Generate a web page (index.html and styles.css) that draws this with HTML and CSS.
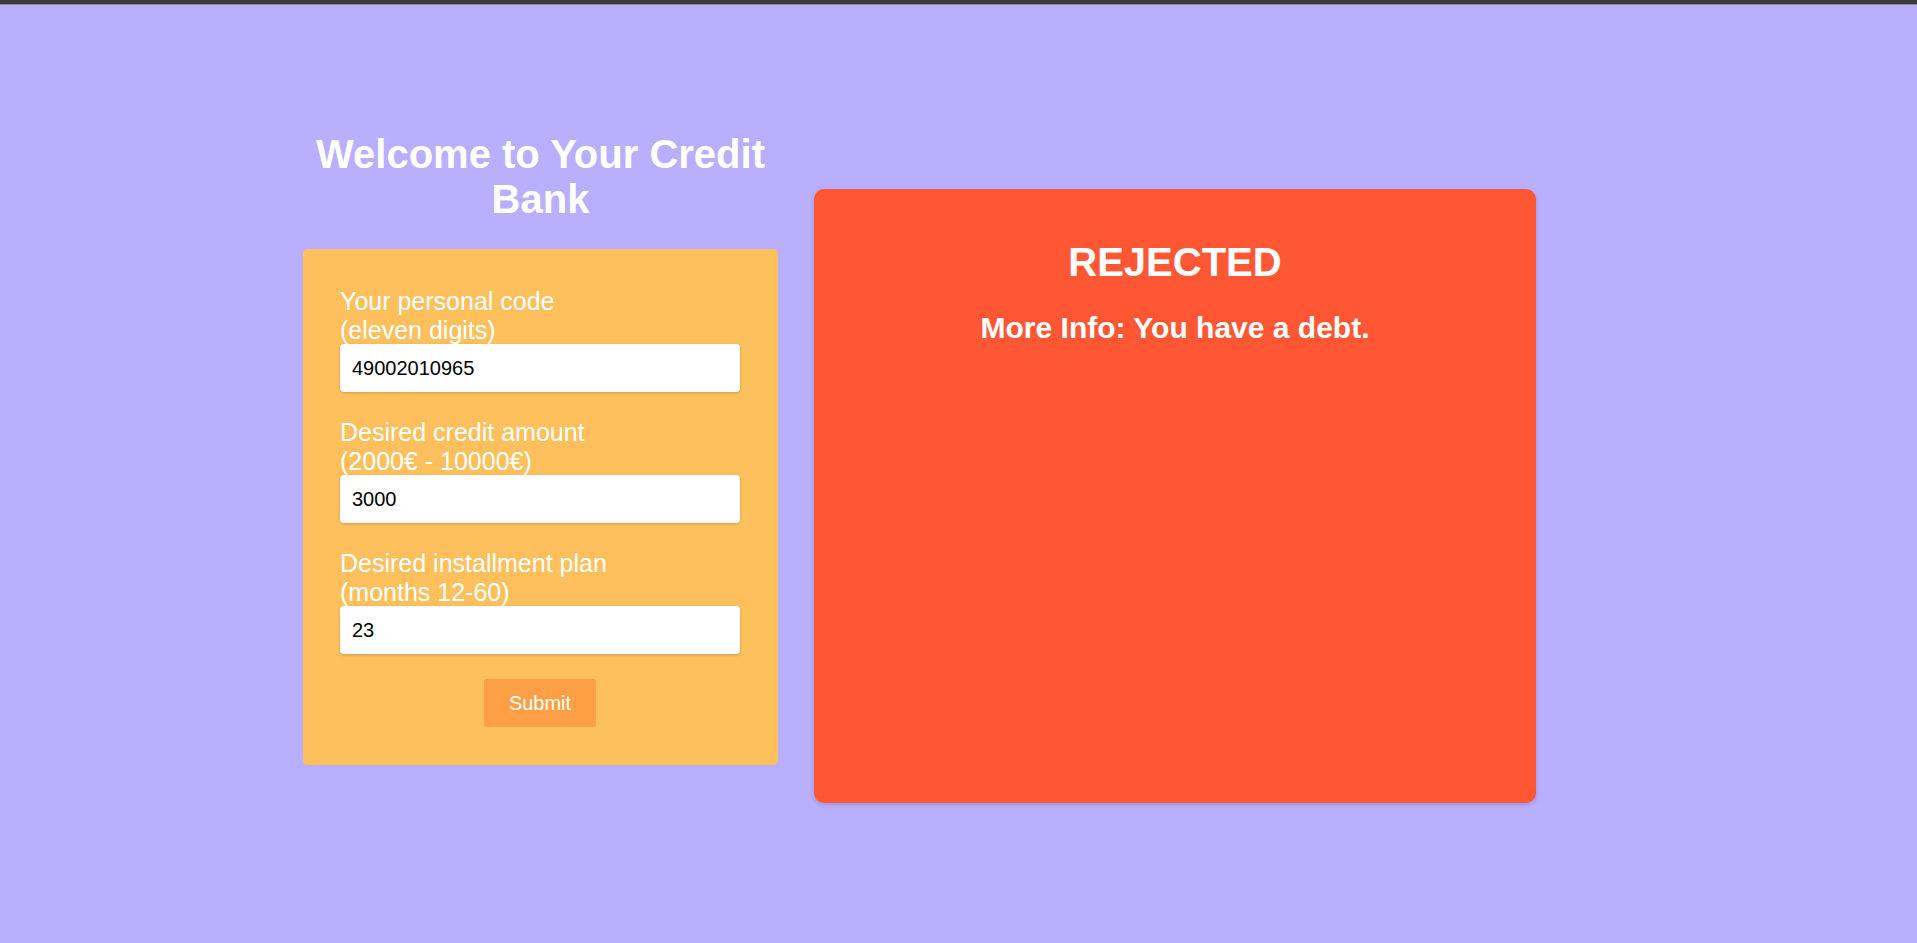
FILE: index.html
```html
<!DOCTYPE html>
<html lang="en">
<head>
<meta charset="utf-8">
<title>Your Credit Bank</title>
<link rel="stylesheet" href="styles.css">
</head>
<body>
<div class="topbar"></div>
<main class="page">
  <section class="left-col">
    <h1 class="title">Welcome to Your Credit Bank</h1>
    <form class="form-card">
      <div class="field">
        <label class="label" for="code">Your personal code<br>(eleven digits)</label>
        <input class="input" id="code" type="text" value="49002010965">
      </div>
      <div class="field">
        <label class="label" for="amount">Desired credit amount<br>(2000€ - 10000€)</label>
        <input class="input" id="amount" type="text" value="3000">
      </div>
      <div class="field">
        <label class="label" for="months">Desired installment plan<br>(months 12-60)</label>
        <input class="input" id="months" type="text" value="23">
      </div>
      <div class="actions">
        <button class="submit" type="button">Submit</button>
      </div>
    </form>
  </section>
  <section class="result-card">
    <h1 class="result-title">REJECTED</h1>
    <h2 class="result-info">More Info: You have a debt.</h2>
  </section>
</main>
</body>
</html>
```
FILE: styles.css
```css
html, body {
  margin: 0;
  padding: 0;
}
body {
  background: #baaeff;
  font-family: "Liberation Sans", Arial, sans-serif;
  font-size: 20px;
  min-height: 943px;
}
.topbar {
  height: 4px;
  background: #3a3a3c;
  border-bottom: 1px solid #8d889f;
}
.page {
  display: flex;
  align-items: flex-start;
  gap: 36px;
  padding: 127px 0 0 303px;
}
.left-col {
  width: 475px;
  display: flex;
  flex-direction: column;
}
.title {
  margin: 0 0 27px;
  font-size: 40px;
  font-weight: bold;
  color: #ffffff;
  text-align: center;
  line-height: 45px;
}
.form-card {
  background: #febf5d;
  border-radius: 5px;
  padding: 38px 38px 38px 37px;
  display: flex;
  flex-direction: column;
  gap: 26px;
}
.field {
  display: flex;
  flex-direction: column;
}
.label {
  color: #ffffff;
  font-size: 25px;
  line-height: 28.5px;
}
.input {
  box-sizing: border-box;
  width: 400px;
  height: 48px;
  border: none;
  border-radius: 4px;
  padding: 0 12px;
  font-family: "Liberation Sans", Arial, sans-serif;
  font-size: 20px;
  color: #000000;
  background: #ffffff;
  box-shadow: 0 1px 3px rgba(0, 0, 0, 0.18);
  outline: none;
}
.actions {
  display: flex;
  justify-content: center;
  margin-top: -1px;
}
.submit {
  width: 112px;
  height: 48px;
  border: none;
  border-radius: 3px;
  background: #ff9f45;
  color: #ffffff;
  font-family: "Liberation Sans", Arial, sans-serif;
  font-size: 20px;
  padding: 0;
}
.result-card {
  box-sizing: border-box;
  width: 722px;
  height: 614px;
  margin-top: 57px;
  background: #ff5733;
  border-radius: 10px;
  box-shadow: 0 2px 4px rgba(0, 0, 0, 0.15);
  padding-top: 50px;
  text-align: center;
  color: #ffffff;
}
.result-title {
  margin: 0 0 26px;
  font-size: 40px;
  line-height: 46px;
  font-weight: bold;
}
.result-info {
  margin: 0;
  font-size: 30px;
  line-height: 34px;
  font-weight: bold;
}
```
